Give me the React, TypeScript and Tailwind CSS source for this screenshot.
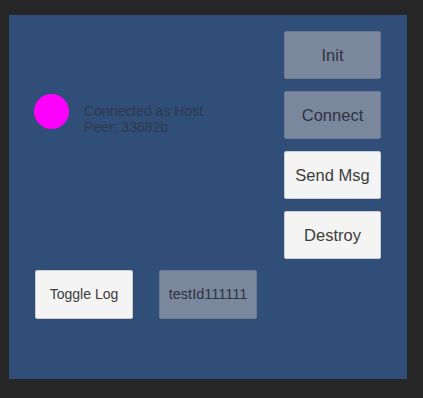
import React from "react";

const font = { fontFamily: '"Liberation Sans", Arial, sans-serif' };

function Btn({ label, light, size }: { label: string; light?: boolean; size: string }) {
  return (
    <div
      className={
        "flex items-center justify-center rounded-[2px] border " +
        (light
          ? "bg-[#f4f4f4] border-[#c9cdd4] text-[#3c3c3c] "
          : "bg-[#7a879d] border-[#6c7a92] text-[#2e3440] ") +
        size
      }
    >
      {label}
    </div>
  );
}

export default function App() {
  return (
    <div className="w-[423px] h-[398px] bg-[#262626] pl-[9px] pt-[15px]" style={font}>
      <div className="w-[398px] h-[364px] bg-[#304e77] flex flex-col">
        <div className="flex flex-row">
          <div className="flex-1 flex flex-row items-start pl-[25px] pt-[79px]">
            <div className="w-[35px] h-[35px] rounded-full bg-[#ff00ff]" />
            <div className="ml-[15px] mt-[9px] text-[14px] leading-[16px] text-[#2f3a4c]">
              <div>Connected as Host</div>
              <div>Peer: 33682b</div>
            </div>
          </div>
          <div className="flex flex-col gap-[12px] pt-[16px] pr-[26px]">
            <Btn label="Init" size="w-[97px] h-[48px] text-[16.5px]" />
            <Btn label="Connect" size="w-[97px] h-[48px] text-[16.5px]" />
            <Btn label="Send Msg" light size="w-[97px] h-[48px] text-[16.5px]" />
            <Btn label="Destroy" light size="w-[97px] h-[48px] text-[16.5px]" />
          </div>
        </div>
        <div className="flex flex-row gap-[26px] pl-[26px] mt-[11px]">
          <Btn label="Toggle Log" light size="w-[98px] h-[49px] text-[14px]" />
          <Btn label="testId111111" size="w-[98px] h-[49px] text-[14.5px]" />
        </div>
      </div>
    </div>
  );
}
